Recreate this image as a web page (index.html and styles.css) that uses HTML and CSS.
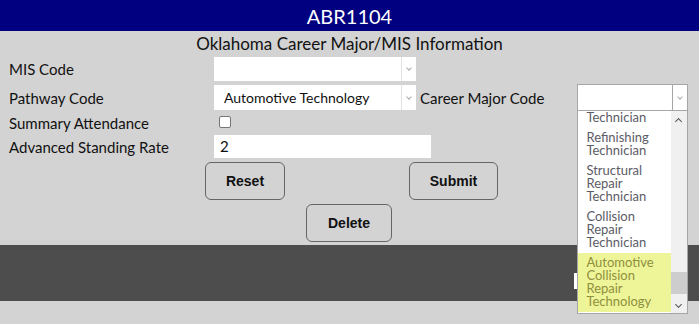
FILE: index.html
```html
<!DOCTYPE html>
<html lang="en">
<head>
  <meta charset="UTF-8">
  <title>ABR1104</title>
  <link rel="stylesheet" href="styles.css">
</head>
<body>

<div class="header">ABR1104</div>
<div class="subtitle">Oklahoma Career Major/MIS Information</div>

<form class="form">
  <div class="row row-mis">
    <label class="label">MIS Code</label>
    <div class="select sel-mis"><span class="sel-text"></span><span class="sel-arrow"></span></div>
  </div>

  <div class="row row-path">
    <label class="label">Pathway Code</label>
    <div class="select sel-path"><span class="sel-text">Automotive Technology</span><span class="sel-arrow"></span></div>
    <label class="label label-career">Career Major Code</label>
    <div class="career">
      <div class="select sel-career"><span class="sel-text"></span><span class="sel-arrow"></span></div>
      <div class="listbox">
        <ul class="options">
          <li>Paint<br>Technician</li>
          <li>Refinishing<br>Technician</li>
          <li>Structural<br>Repair<br>Technician</li>
          <li>Collision<br>Repair<br>Technician</li>
          <li class="hover">Automotive<br>Collision<br>Repair<br>Technology</li>
        </ul>
        <div class="scrollbar">
          <span class="sb-up"></span>
          <span class="sb-thumb"></span>
          <span class="sb-down"></span>
        </div>
      </div>
    </div>
  </div>

  <div class="row row-sum">
    <label class="label">Summary Attendance</label>
    <span class="check"></span>
  </div>

  <div class="row row-rate">
    <label class="label">Advanced Standing Rate</label>
    <div class="textbox">2</div>
  </div>

  <div class="buttons">
    <button type="button" class="btn btn-reset">Reset</button>
    <button type="button" class="btn btn-submit">Submit</button>
  </div>
  <div class="buttons buttons-center">
    <button type="button" class="btn btn-delete">Delete</button>
  </div>
</form>

<div class="footer">
  <span class="footer-box"></span>
</div>

</body>
</html>
```

FILE: styles.css
```css
html, body { height: 100%; }
body { margin: 0; background-color: #d3d3d3; font-family: Lato, "Open Sans", sans-serif; color: #111; }

.header { background-color: #000080; color: white; height: 31px; line-height: 32px; text-align: center; font-size: 20px; }
.subtitle { height: 26px; line-height: 26px; text-align: center; font-size: 17px; }

.form { padding-left: 9px; }
.row { display: flex; align-items: center; }
.label { width: 205px; font-size: 15px; }
.label-career { width: auto; margin-left: 4px; margin-right: 33px; }

.row-mis { height: 24px; }
.row-path { height: 25px; margin-top: 4px; }
.row-sum { height: 25px; }
.row-rate { height: 23px; }

.select { position: relative; background: white; display: flex; align-items: center; box-sizing: border-box; }
.sel-text { flex: 1; padding-left: 10px; font-size: 14px; }
.sel-arrow { width: 14px; height: 100%; border-left: 1px solid #e2e2e2; position: relative; }
.sel-arrow::after { content: ""; position: absolute; left: 5px; top: 50%; width: 3px; height: 3px; margin-top: -3px; border-right: 1px solid #aaa; border-bottom: 1px solid #aaa; transform: rotate(45deg); }
.sel-mis, .sel-path { width: 202px; height: 100%; }

.career { position: relative; width: 111px; height: 26px; align-self: flex-start; margin-top: -1px; z-index: 5; }
.sel-career { width: 111px; height: 27px; border: 1px solid #a6a6a6; }
.sel-career .sel-arrow { border-left-color: #a6a6a6; width: 14px; }

.listbox { position: absolute; left: 0; top: 27px; width: 111px; height: 203px; box-sizing: border-box; border: 1px solid #a6a6a6; border-top: none; background: white; display: flex; align-items: flex-start; overflow: hidden; }
.options { list-style: none; margin: 0; padding: 0; flex: 1; margin-top: -16px; }
.options li { padding: 3px 0 4px 8px; font-size: 13px; line-height: 13px; color: #5c5c66; }
.options li.hover { background-color: #eef599; color: #8e8f3c; }
.scrollbar { width: 16px; height: 100%; background: #f0f0f0; position: relative; }
.sb-up, .sb-down { position: absolute; left: 5px; width: 4px; height: 4px; border-left: 1.5px solid #555; border-top: 1.5px solid #555; }
.sb-up { top: 8px; transform: rotate(45deg); }
.sb-down { bottom: 6px; transform: rotate(225deg); }
.sb-thumb { position: absolute; left: 0; right: 0; top: 161px; height: 22px; background: #cdcdcd; }

.check { width: 10px; height: 10px; border: 1px solid #767676; border-radius: 2px; background: white; margin-left: 5px; margin-top: -1px; }

.textbox { width: 217px; height: 100%; background: white; font-size: 15px; padding-left: 6px; box-sizing: border-box; line-height: 23px; }

.buttons { display: flex; }
.btn { font-family: "Liberation Sans", Arial, sans-serif; font-weight: bold; font-size: 14px; color: #111; background: transparent; border: 1px solid #666; border-radius: 6px; cursor: pointer; padding: 0; }
.btn-reset { width: 80px; height: 38px; margin-left: 196px; margin-top: 4px; }
.btn-submit { width: 89px; height: 38px; margin-left: 124px; margin-top: 4px; }
.btn-delete { width: 86px; height: 38px; margin-left: 297px; margin-top: 4px; }

.footer { background-color: #4d4d4d; height: 56px; margin-top: 3px; padding-left: 574px; padding-top: 28px; box-sizing: border-box; }
.footer-box { display: block; width: 40px; height: 16px; background: white; }
```
